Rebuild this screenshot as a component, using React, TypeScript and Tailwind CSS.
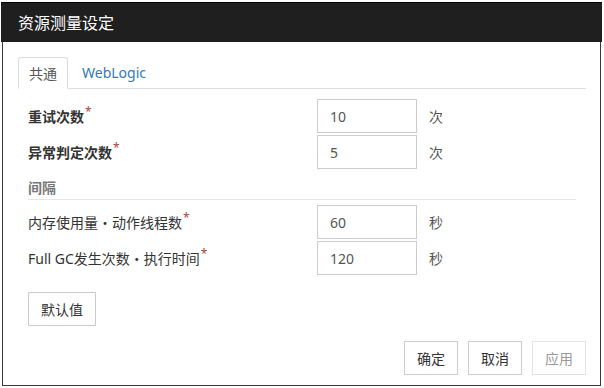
// ResourceMeasureDialog - settings dialog for resource measurement
const FONT = { fontFamily: '"Noto Sans", "Noto Sans CJK SC", sans-serif' };

interface FieldRowProps {
    label: string;
    value: string;
    unit: string;
    bold?: boolean;
}

const Required = () => <sup className="ml-[1px] text-[12px] font-normal text-[#a94442] relative -top-[6px]">*</sup>;

const FieldRow = ({ label, value, unit, bold }: FieldRowProps) => (
    <div className="flex items-center h-[34px]">
        <label className={`w-[289px] text-[14px] text-[#333] ${bold ? 'font-bold' : ''}`}>
            {label}
            <Required />
        </label>
        <input
            className="w-[100px] h-[34px] border border-[#ccc] px-[12px] text-[14px] text-[#555] outline-none"
            style={FONT}
            defaultValue={value}
        />
        <span className="ml-[12px] text-[14px] text-[#555]">{unit}</span>
    </div>
);

export default function App() {
    return (
        <div className="w-[604px] h-[388px] bg-white" style={FONT}>
            <div className="ml-[1px] pt-[2px] w-[601px]">
                {/* Title bar */}
                <div className="h-[40px] bg-[#1f1f1f] border-t border-black flex items-center pl-[17px]">
                    <h1 className="text-[16px] text-white">资源测量设定</h1>
                </div>

                {/* Body */}
                <div className="ml-[1px] w-[599px] h-[344px] border-x border-b border-[#3a3a3a] pt-[15px] pl-[15px] pr-[14px] flex flex-col">
                    {/* Tabs */}
                    <div className="flex border-b border-[#ddd] h-[32px]">
                        <div className="-mb-[1px] h-[32px] w-[50px] flex items-center justify-center border border-[#ddd] border-b-white bg-white rounded-t-[3px] text-[14px] text-[#555]">
                            共通
                        </div>
                        <div className="h-[31px] ml-[2px] pl-[12px] flex items-center text-[14px] text-[#337ab7]">
                            WebLogic
                        </div>
                    </div>

                    {/* Tab content */}
                    <div className="pl-[10px] pr-[10px] pt-[10px] flex flex-col">
                        <div className="flex flex-col gap-[2px]">
                            <FieldRow label="重试次数" value="10" unit="次" bold />
                            <FieldRow label="异常判定次数" value="5" unit="次" bold />
                        </div>

                        <div className="mt-[8px] h-[23px] border-b border-[#e5e5e5] text-[14px] font-bold text-[#777] leading-[22px]">
                            间隔
                        </div>

                        <div className="mt-[5px] flex flex-col gap-[2px]">
                            <FieldRow label="内存使用量・动作线程数" value="60" unit="秒" />
                            <FieldRow label="Full GC发生次数・执行时间" value="120" unit="秒" />
                        </div>

                        <div className="mt-[17px]">
                            <button className="w-[68px] h-[34px] border border-[#ccc] bg-white text-[14px] text-[#333]">
                                默认值
                            </button>
                        </div>
                    </div>

                    {/* Footer buttons */}
                    <div className="mt-[15px] flex justify-end gap-[10px]">
                        <button className="w-[54px] h-[34px] border border-[#ccc] bg-white text-[14px] text-[#333]">确定</button>
                        <button className="w-[54px] h-[34px] border border-[#ccc] bg-white text-[14px] text-[#333]">取消</button>
                        <button className="w-[54px] h-[34px] border border-[#e3e3e3] bg-white text-[14px] text-[#9a9a9a]" disabled>应用</button>
                    </div>
                </div>
            </div>
        </div>
    );
}
